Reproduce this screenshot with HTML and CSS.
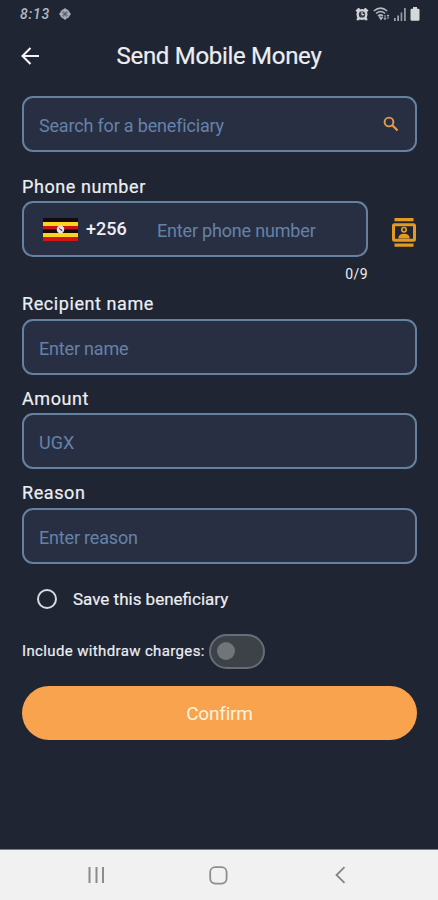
FILE: index.html
```html
<!DOCTYPE html>
<html lang="en">
<head>
<meta charset="utf-8">
<title>Send Mobile Money</title>
<link rel="stylesheet" href="styles.css">
</head>
<body>
<div class="screen">
  <div class="status">
    <span class="clock">8:13</span>
    <svg class="globe" width="12" height="12" viewBox="0 0 12 12"><circle cx="6" cy="6" r="4.200" fill="#7c828f" stroke="#a9aeb9" stroke-width="1.600"/><path d="M6 0v12M0 6h12" stroke="#b9bdc6" stroke-width="1"/><path d="M4.500 4.500h3v3h-3z" fill="#555d6c"/></svg>
    <div class="status-icons">
      <svg width="14" height="14" viewBox="0 0 14 14"><circle cx="7" cy="7.400" r="5.500" fill="#d2d4d9"/><path d="M.5 3.500l3-2.800 2 1.500-3.400 3zM13.500 3.500l-3-2.800-2 1.500 3.400 3zM2 10.500h2.500v2.700H1.500zM12 10.500H9.500v2.700h3z" fill="#d2d4d9"/><circle cx="7" cy="7.400" r="3.200" fill="#343a49"/><path d="M7 4.800v2.800h2.200" fill="none" stroke="#d2d4d9" stroke-width="1.200"/></svg>
      <svg width="17" height="14" viewBox="0 0 17 14" fill="none" stroke="#b4b8c0" stroke-width="1.500"><path d="M.8 4Q7.500-1.800 14.200 4M3 6.500Q7.500 2.500 12 6.500M5 9Q7.500 6.800 10 9"/><path d="M6.300 9.300L8 12l1.500-2.200" stroke-width="1.600"/><path d="M12 8v4.500M10.800 11l1.200 1.500L13.200 11M15 12V8M14 9l1-1.200L16 9" stroke-width=".9"/></svg>
      <svg width="12" height="13" viewBox="0 0 12 13"><path d="M0 10h1.700v3H0zM3.300 7.500H5V13H3.300z" fill="#a0a5af"/><path d="M6.600 4.500h1.700V13H6.600zM10 0h1.800v13H10z" fill="#9297a3"/></svg>
      <svg width="10" height="14" viewBox="0 0 10 14"><path d="M3 0h4v1.700h1.300q1.200 0 1.200 1.300v9.500q0 1.200-1.200 1.200H1.700Q.5 13.700.5 12.500V3q0-1.300 1.200-1.300H3z" fill="#d5d7da"/></svg>
    </div>
  </div>
  <header class="bar">
    <svg class="back" width="18" height="18" viewBox="0 0 18 18" fill="none" stroke="#f2f3f6" stroke-width="2.100"><path d="M18 9H1.800M9.500 1L1.500 9l8 8"/></svg>
    <h1 class="title">Send Mobile Money</h1>
  </header>
  <main class="form">
    <div class="field search">
      <span class="hint">Search for a beneficiary</span>
      <svg class="lens" width="16" height="16" viewBox="0 0 16 16" fill="none" stroke="#e39a55" stroke-width="1.900"><circle cx="6" cy="6" r="4.400"/><path d="M9.300 9.300l5.200 5.200" stroke-width="2.200"/></svg>
    </div>
    <div class="label l-phone">Phone number</div>
    <div class="phone-row">
      <div class="field phone">
        <svg class="flag" width="35" height="23" viewBox="0 0 35 23"><path d="M0 0h35v4H0z" fill="#100c10"/><path d="M0 4h35v4H0z" fill="#fbd51c"/><path d="M0 8h35v3.500H0z" fill="#c91415"/><path d="M0 11.500h35v3.500H0z" fill="#160b0d"/><path d="M0 15h35v4H0z" fill="#fbd51c"/><path d="M0 19h35v4H0z" fill="#d41516"/><circle cx="17.500" cy="11.500" r="3.700" fill="#e9e4e6"/><path d="M15.700 9l1 2.700 2.800 1.800-.5-2-1.800-.8z" fill="#55454c"/></svg>
        <span class="code">+256</span>
        <span class="hint">Enter phone number</span>
      </div>
      <svg class="contacts" width="24" height="29" viewBox="0 0 24 29"><path d="M2.500 0h19v3.200h-19zM2.500 25.500h19v3.200h-19z" fill="#e5991f"/><rect x="1.500" y="6.800" width="21" height="15.500" rx="1" fill="none" stroke="#e5991f" stroke-width="3"/><circle cx="12" cy="11.700" r="2.200" fill="none" stroke="#e5991f" stroke-width="1.700"/><path d="M6.300 20.500q0-4.700 5.700-4.700t5.700 4.700z" fill="#e5991f"/></svg>
    </div>
    <div class="counter">0/9</div>
    <div class="label l-name">Recipient name</div>
    <div class="field"><span class="hint">Enter name</span></div>
    <div class="label l-amount">Amount</div>
    <div class="field"><span class="hint ugx">UGX</span></div>
    <div class="label">Reason</div>
    <div class="field"><span class="hint">Enter reason</span></div>
    <div class="save"><span class="radio"></span><span>Save this beneficiary</span></div>
    <div class="charges"><span>Include withdraw charges:</span><span class="switch"><span class="knob"></span></span></div>
    <div class="confirm">Confirm</div>
  </main>
  <nav class="nav">
    <svg width="17" height="18" viewBox="0 0 17 18"><path d="M1.500 1v16M8.500 1v16M15 1v16" stroke="#8c8c8c" stroke-width="2"/></svg>
    <svg width="19" height="19" viewBox="0 0 19 19"><rect x="1.200" y="1.200" width="16.400" height="16.400" rx="5" fill="none" stroke="#8e8e8e" stroke-width="1.800"/></svg>
    <svg width="11" height="18" viewBox="0 0 11 18"><path d="M9.500 1.200L1.500 9l8 7.800" fill="none" stroke="#858585" stroke-width="1.800"/></svg>
  </nav>
</div>
</body>
</html>
```
FILE: styles.css
```css
* { box-sizing: border-box; }
body { margin: 0; background: #1f2532; font-family: Roboto, "Liberation Sans", sans-serif; color: #eceef2; }
svg { display: block; flex: none; }
.screen { width: 438px; height: 900px; display: flex; flex-direction: column; overflow: hidden; white-space: nowrap; }
.status { height: 28px; display: flex; align-items: center; padding: 0 18px 0 20px; }
.clock { width: 30px; font-size: 14px; line-height: 28px; font-weight: 500; font-style: italic; letter-spacing: 0.8px; color: #b3b8c2; }
.globe { margin-left: 9px; }
.status-icons { margin-left: auto; display: flex; gap: 4px; align-items: center; }
.bar { height: 56px; display: grid; grid-template-columns: 18px 1fr 18px; align-items: center; padding: 0 21px; }
.title { margin: 0; font-size: 24px; line-height: 56px; font-weight: 400; text-align: center; letter-spacing: -0.3px; -webkit-text-stroke: 0.2px; }
.form { flex: 1; padding: 12px 21px 0 22px; }
.field { height: 56px; border: 2px solid #66809f; border-radius: 11px; background: #292f42; display: flex; align-items: center; padding: 2px 15px 0; }
.hint { font-size: 18px; letter-spacing: -0.18px; color: #6482a8; }
.ugx { letter-spacing: 0; }
.search { padding-right: 16px; }
.lens { margin: -2px 0 0 auto; }
.label { height: 39px; padding-top: 10px; font-size: 18px; line-height: 28px; letter-spacing: 0.58px; -webkit-text-stroke: 0.2px; }
.l-phone { height: 49px; padding-top: 21px; }
.l-amount { height: 38px; }
.phone-row { display: flex; align-items: center; justify-content: space-between; padding-right: 1px; }
.phone { width: 346px; padding-left: 19px; }
.flag { margin-top: -1px; }
.code { width: 71px; margin: -4px 0 0 8px; font-size: 18px; font-weight: 500; }
.contacts { margin-top: 7px; }
.counter { width: 346px; height: 32px; font-size: 14px; line-height: 34px; letter-spacing: 0.4px; text-align: right; }
.l-name { height: 30px; padding-top: 1px; }
.save { height: 72px; margin-top: -1px; display: flex; align-items: center; gap: 16px; padding-left: 15px; font-size: 17px; -webkit-text-stroke: 0.2px; }
.radio { width: 20px; height: 20px; border: 2.500px solid #d8dae0; border-radius: 50%; }
.charges { height: 34px; margin-top: -1px; display: flex; align-items: center; gap: 4px; font-size: 15px; letter-spacing: 0.36px; -webkit-text-stroke: 0.2px; }
.switch { width: 56px; height: 35px; border: 2px solid #686d73; border-radius: 18px; background: #3c4247; display: flex; align-items: center; padding-left: 6px; }
.knob { width: 18px; height: 18px; border-radius: 50%; background: #70757a; }
.confirm { height: 54px; margin-top: 18px; border-radius: 27px; background: #f9a34e; color: #fff3df; display: flex; align-items: center; justify-content: center; font-size: 19px; letter-spacing: -0.2px; }
.nav { height: 51px; padding-right: 2px; border-top: 1px solid #797d88; background: #f1f1f1; display: grid; grid-template-columns: 122px 122px 122px; justify-content: center; justify-items: center; align-items: center; }
```
